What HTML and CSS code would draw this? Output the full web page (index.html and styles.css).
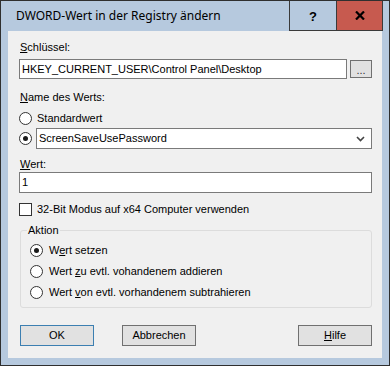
FILE: index.html
```html
<!DOCTYPE html>
<html lang="de">
<head>
<meta charset="utf-8">
<title>DWORD-Wert in der Registry ändern</title>
<link rel="stylesheet" href="styles.css">
</head>
<body>
<div class="window">
  <div class="titlebar">
    <div class="title">DWORD-Wert in der Registry ändern</div>
    <div class="tb-btn help">?</div>
    <div class="tb-btn close">
      <svg width="10" height="9" viewBox="0 0 10 9"><path d="M1 0.5 L9 8.5 M9 0.5 L1 8.5" stroke="#000" stroke-width="2.2" fill="none"/></svg>
    </div>
  </div>
  <div class="client">
    <div class="label lbl-key"><u>S</u>chlüssel:</div>
    <div class="key-row">
      <div class="textbox key-box">HKEY_CURRENT_USER\Control Panel\Desktop</div>
      <div class="btn dots">...</div>
    </div>
    <div class="label lbl-name"><u>N</u>ame des Werts:</div>
    <div class="opt opt-std"><span class="radio"></span><span>Standardwert</span></div>
    <div class="opt opt-name"><span class="radio on"></span>
      <div class="combo"><span>ScreenSaveUsePassword</span>
        <svg class="chev" width="9" height="6" viewBox="0 0 9 6"><path d="M1 1 L4.5 4.5 L8 1" stroke="#444" stroke-width="1.6" fill="none"/></svg>
      </div>
    </div>
    <div class="label lbl-val"><u>W</u>ert:</div>
    <div class="textbox val-box">1</div>
    <div class="opt opt-chk"><span class="check"></span><span>32-Bit Modus auf x64 Computer verwenden</span></div>
    <fieldset class="group">
      <legend>Aktion</legend>
      <div class="opt gopt"><span class="radio on"></span><span>W<u>e</u>rt setzen</span></div>
      <div class="opt gopt"><span class="radio"></span><span>Wert <u>z</u>u evtl. vohandenem addieren</span></div>
      <div class="opt gopt"><span class="radio"></span><span>Wert <u>v</u>on evtl. vorhandenem subtrahieren</span></div>
    </fieldset>
    <div class="buttons">
      <div class="btn pbtn default">OK</div>
      <div class="btn pbtn cancel">Abbrechen</div>
      <div class="btn pbtn helpbtn"><u>H</u>ilfe</div>
    </div>
  </div>
</div>
</body>
</html>
```
FILE: styles.css
```css
html, body {
  margin: 0;
  padding: 0;
  background: #ffffff;
}
.window {
  width: 390px;
  height: 366px;
  box-sizing: border-box;
  border: 1px solid #2f2f2f;
  background: #b6c9de;
  display: flex;
  flex-direction: column;
  font-family: "Liberation Sans", Arial, sans-serif;
  font-size: 11px;
  color: #000;
}
.titlebar {
  height: 30px;
  display: flex;
  padding-right: 6px;
  flex: none;
}
.title {
  flex: 1;
  font-family: "Noto Sans", sans-serif;
  font-size: 12px;
  line-height: 30px;
  padding-left: 15px;
  color: #000;
  white-space: nowrap;
}
.tb-btn {
  width: 47px;
  height: 30px;
  box-sizing: border-box;
  border-bottom: 1px solid #3a3a3a;
  border-left: 1px solid #3a3a3a;
  display: flex;
  align-items: center;
  justify-content: center;
}
.help {
  font-weight: bold;
  font-size: 13px;
  font-family: "Liberation Sans", sans-serif;
  padding-top: 1px;
}
.close {
  background: #c75a4f;
  border-right: 1px solid #3a3a3a;
}
.client {
  flex: 1;
  margin: 0 7px 7px 7px;
  background: #f0f0f0;
  padding: 10px 10px 0 11px;
  display: flex;
  flex-direction: column;
}
.label {
  line-height: 13px;
  padding-left: 1px;
}
.key-row {
  display: flex;
  align-items: center;
  margin-top: 5px;
  gap: 3px;
}
.textbox {
  box-sizing: border-box;
  height: 20px;
  border: 1px solid #7a7a7a;
  background: #fff;
  line-height: 18px;
  padding-left: 2px;
  white-space: nowrap;
}
.key-box {
  width: 328px;
}
.btn {
  box-sizing: border-box;
  background: #e1e1e1;
  border: 1px solid #707070;
  text-align: center;
}
.dots {
  width: 22px;
  height: 18px;
  line-height: 18px;
  font-size: 11px;
  color: #333;
}
.lbl-name {
  margin-top: 12px;
}
.opt {
  display: flex;
  align-items: center;
  line-height: 13px;
}
.radio {
  width: 13px;
  height: 13px;
  box-sizing: border-box;
  border: 1px solid #333;
  border-radius: 50%;
  background: #fff;
  margin-right: 5px;
  position: relative;
  flex: none;
}
.radio.on::after {
  content: "";
  position: absolute;
  left: 3px;
  top: 3px;
  width: 5px;
  height: 5px;
  border-radius: 50%;
  background: #1a1a1a;
}
.opt-std {
  margin-top: 6px;
  height: 17px;
}
.opt-name {
  margin-top: 1px;
}
.opt-name .radio {
  margin-right: 4px;
}
.combo {
  flex: 1;
  height: 21px;
  box-sizing: border-box;
  border: 1px solid #7a7a7a;
  background: #fff;
  display: flex;
  align-items: center;
  justify-content: space-between;
  padding: 0 6px 0 2px;
}
.lbl-val {
  margin-top: 9px;
}
.val-box {
  margin-top: 1px;
  height: 21px;
  line-height: 19px;
}
.check {
  width: 13px;
  height: 13px;
  box-sizing: border-box;
  border: 1px solid #333;
  background: #fff;
  margin-right: 5px;
  flex: none;
}
.opt-chk {
  margin-top: 10px;
}
.group {
  margin: 8px 0 0 1px;
  padding: 3px 0 4px 9px;
  border: 1px solid #dcdcdc;
  border-radius: 3px;
  min-width: 0;
}
.group legend {
  padding: 0 1px;
  margin-left: -3px;
  line-height: 13px;
}
.gopt {
  height: 21px;
}
.gopt .radio {
  margin-right: 6px;
}
.buttons {
  display: flex;
  margin-top: 17px;
  padding-left: 1px;
}
.pbtn {
  width: 74px;
  height: 21px;
  line-height: 19px;
}
.default {
  border-color: #3c7fb1;
}
.cancel {
  margin-left: 28px;
}
.helpbtn {
  margin-left: auto;
}
```
